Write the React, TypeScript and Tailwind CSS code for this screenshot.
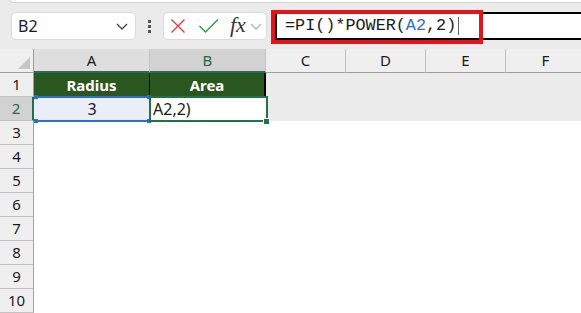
import React from "react";

const UI = { fontFamily: '"Noto Sans", "Open Sans", Arial, sans-serif' };

type Col = { l: string; w: string; hdr: string; txt: string; bb: string };
const COLS: Col[] = [
  { l: "A", w: "w-[116px]", hdr: "bg-[#dedede]", txt: "text-[#1a1a1a]", bb: "border-b-2 border-b-[#217346]" },
  { l: "B", w: "w-[116px]", hdr: "bg-[#d2d2d2]", txt: "text-[#1d6b3f]", bb: "border-b-2 border-b-[#217346]" },
  { l: "C", w: "w-[80px]", hdr: "bg-[#efefef]", txt: "text-[#1a1a1a]", bb: "border-b border-b-[#9e9e9e]" },
  { l: "D", w: "w-[80px]", hdr: "bg-[#efefef]", txt: "text-[#1a1a1a]", bb: "border-b border-b-[#9e9e9e]" },
  { l: "E", w: "w-[80px]", hdr: "bg-[#efefef]", txt: "text-[#1a1a1a]", bb: "border-b border-b-[#9e9e9e]" },
  { l: "F", w: "w-[80px]", hdr: "bg-[#efefef]", txt: "text-[#1a1a1a]", bb: "border-b border-b-[#9e9e9e]" },
];

function Chevron({ className }: { className?: string }) {
  return (
    <svg width="12" height="7" viewBox="0 0 12 7" className={className}>
      <path d="M1 1 L6 6 L11 1" fill="none" stroke="currentColor" strokeWidth="1.3" />
    </svg>
  );
}

function RowHeader({ n, active }: { n: number; active?: boolean }) {
  return (
    <div
      className={
        "w-[34px] shrink-0 h-full flex items-center justify-center text-[15px] border-b border-b-[#c4c4c4] " +
        (active
          ? "bg-[#d2d2d2] text-[#1d6b3f] border-r-2 border-r-[#217346]"
          : "bg-[#efefef] text-[#1a1a1a] border-r border-r-[#9e9e9e]")
      }
    >
      {n}
    </div>
  );
}

export default function App() {
  const emptyRows = [3, 4, 5, 6, 7, 8, 9, 10];
  return (
    <div className="w-[581px] h-[313px] overflow-hidden bg-[#ebebeb] flex flex-col relative" style={UI}>
      {/* top strip */}
      <div className="h-[4px] flex shrink-0">
        <div className="ml-[10px] flex-1 h-[3px] bg-white rounded-bl-[4px] border-b border-l border-[#d4d4d4]" />
      </div>

      {/* toolbar */}
      <div className="h-[45px] shrink-0 flex items-start pt-[8px]">
        <div className="ml-[11px] w-[125px] h-[28px] bg-white rounded-[5px] border border-[#dadada] flex items-center justify-between pl-[6px] pr-[7px]">
          <span className="text-[16px] text-[#1a1a1a] leading-none">B2</span>
          <Chevron className="text-[#444]" />
        </div>
        <div className="w-[27px] h-[28px] flex flex-col items-center justify-center gap-[2px]">
          <div className="w-[3px] h-[3px] bg-[#555]" />
          <div className="w-[3px] h-[3px] bg-[#555]" />
          <div className="w-[3px] h-[3px] bg-[#555]" />
        </div>
        <div className="w-[104px] h-[28px] bg-white rounded-[5px] border border-[#dadada] flex items-center pl-[6px]">
          <svg width="16" height="16" viewBox="0 0 16 16">
            <path d="M1.5 1.5 L14.5 14.5 M14.5 1.5 L1.5 14.5" stroke="#e8383d" strokeWidth="1.4" fill="none" />
          </svg>
          <svg width="22" height="16" viewBox="0 0 22 16" className="ml-[12px]">
            <path d="M1.5 8 L7.5 14 L20 1.5" stroke="#2f9e4f" strokeWidth="1.5" fill="none" />
          </svg>
          <span
            className="ml-[10px] text-[22px] italic leading-none text-[#333] -mt-[2px]"
            style={{ fontFamily: '"Liberation Serif", "Times New Roman", serif' }}
          >
            fx
          </span>
          <Chevron className="ml-[4px] text-[#b0b0b0]" />
        </div>
        <div className="ml-[8px] flex-1 h-[28px] bg-white border-y-2 border-l-2 border-black flex items-center pl-[8px]">
          <span
            className="text-[16.8px] leading-none text-[#1a1a1a] whitespace-pre"
            style={{ fontFamily: '"Liberation Mono", "DejaVu Sans Mono", monospace' }}
          >
            =PI()*POWER(<span className="text-[#2f6fc6]">A2</span>,2)
          </span>
          <div className="ml-[2px] w-px h-[18px] bg-[#666]" />
        </div>
      </div>

      {/* grid */}
      <div className="flex flex-col">
        {/* column headers */}
        <div className="h-[24px] flex">
          <div className="w-[34px] shrink-0 h-full bg-[#efefef] border-r border-r-[#9e9e9e] border-b border-b-[#9e9e9e] flex items-end justify-end pr-[3px] pb-[3px]">
            <svg width="12" height="12" viewBox="0 0 12 12">
              <polygon points="12,0 12,12 0,12" fill="#c6c6c6" />
            </svg>
          </div>
          {COLS.map((c) => (
            <div
              key={c.l}
              className={`${c.w} ${c.hdr} ${c.txt} ${c.bb} shrink-0 h-full flex items-center justify-center text-[15px] border-r border-r-[#c4c4c4]`}
            >
              {c.l}
            </div>
          ))}
        </div>

        {/* row 1 */}
        <div className="h-[24px] flex">
          <RowHeader n={1} />
          <div className="w-[116px] shrink-0 h-full bg-[#2a5720] border-r border-r-black flex items-center justify-center text-white font-bold text-[15px]">
            Radius
          </div>
          <div className="w-[116px] shrink-0 h-full bg-[#2a5720] border-r-2 border-r-black flex items-center justify-center text-white font-bold text-[15px]">
            Area
          </div>
        </div>

        {/* row 2 */}
        <div className="h-[24px] flex">
          <RowHeader n={2} active />
          <div className="w-[116px] shrink-0 h-full bg-[#e9eef8] relative flex items-center justify-center text-[16px] text-[#1a1a1a]">
            3
            <div className="absolute -top-[1px] -bottom-[1px] left-0 right-0 border-y-2 border-[#2f6fc6] pointer-events-none" />
            <div className="absolute -top-[2px] left-0 w-[4px] h-[4px] bg-[#2f6fc6]" />
            <div className="absolute -bottom-[2px] left-0 w-[4px] h-[4px] bg-[#2f6fc6]" />
            <div className="absolute -top-[2px] -right-[1px] w-[4px] h-[4px] bg-[#2f6fc6]" />
            <div className="absolute -bottom-[2px] -right-[1px] w-[4px] h-[4px] bg-[#2f6fc6]" />
          </div>
          <div className="w-[116px] shrink-0 h-full bg-white relative flex items-center pl-[3px] text-[16px] text-[#1a1a1a]">
            A2,2)
            <div className="absolute -top-[1px] -bottom-[1px] -left-[1px] -right-[2px] border-2 border-[#217346] pointer-events-none" />
            <div className="absolute -bottom-[3px] -right-[3px] w-[6px] h-[6px] bg-[#217346] border-l border-t border-white" />
          </div>
        </div>

        {emptyRows.map((n) => (
          <div key={n} className="h-[24px] flex">
            <RowHeader n={n} />
            <div className="flex-1 bg-white" />
          </div>
        ))}
      </div>

      {/* red highlight annotation */}
      <div className="absolute left-[271px] top-[10px] w-[212px] h-[34px] border-4 border-[#e3141e] pointer-events-none" />
    </div>
  );
}
